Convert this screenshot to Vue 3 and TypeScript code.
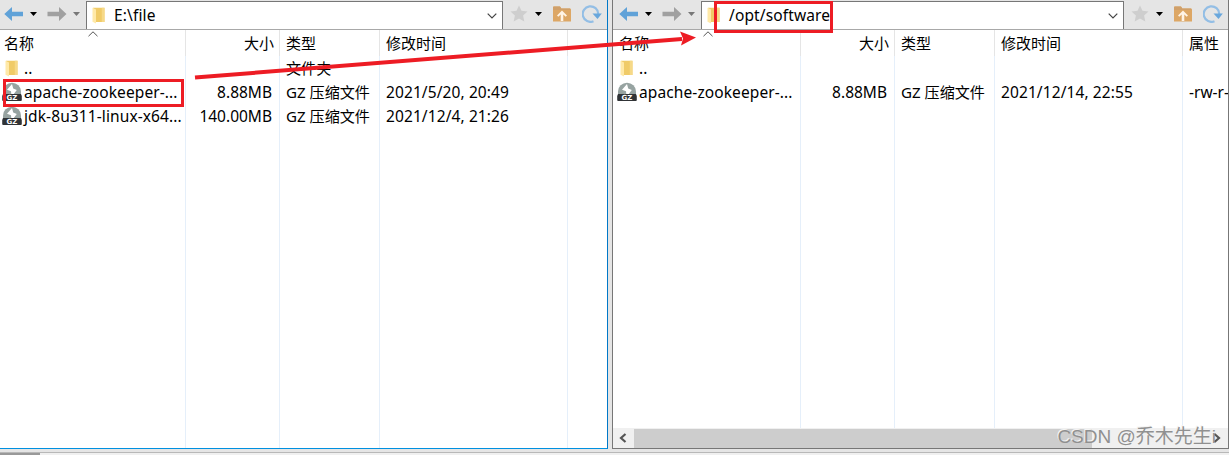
<script setup lang="ts">
interface Column {
  key: string
  title: string
  cells: string[]
}
interface Pane {
  id: string
  path: string
  columns: Column[]
}

const panes: Pane[] = [
  {
    id: 'local',
    path: 'E:\\file',
    columns: [
      { key: 'name', title: '名称', cells: ['..', 'apache-zookeeper-...', 'jdk-8u311-linux-x64...'] },
      { key: 'size', title: '大小', cells: ['', '8.88MB', '140.00MB'] },
      { key: 'type', title: '类型', cells: ['文件夹', 'GZ 压缩文件', 'GZ 压缩文件'] },
      { key: 'time', title: '修改时间', cells: ['', '2021/5/20, 20:49', '2021/12/4, 21:26'] },
    ],
  },
  {
    id: 'remote',
    path: '/opt/software',
    columns: [
      { key: 'name', title: '名称', cells: ['..', 'apache-zookeeper-...'] },
      { key: 'size', title: '大小', cells: ['', '8.88MB'] },
      { key: 'type', title: '类型', cells: ['', 'GZ 压缩文件'] },
      { key: 'time', title: '修改时间', cells: ['', '2021/12/14, 22:55'] },
      { key: 'attr', title: '属性', cells: ['', '-rw-r-'] },
    ],
  },
]
</script>

<template>
  <div class="window">
    <div class="panes">
      <section v-for="pane in panes" :key="pane.id" class="pane" :class="pane.id">
        <div class="toolbar">
          <svg class="arrow back" viewBox="0 0 20 16"><path d="M0.3 8 8 1v4.8h11v4.4H8V15z" /></svg>
          <svg class="caret" viewBox="0 0 8 4"><path d="M0 0h7L3.5 4z" /></svg>
          <svg class="arrow forward" viewBox="0 0 20 16"><path d="M19.5 8 12 1v4.8H0.5v4.4H12V15z" /></svg>
          <svg class="caret dim" viewBox="0 0 8 4"><path d="M0 0h7L3.5 4z" /></svg>
          <div class="address">
            <svg class="folder" viewBox="0 0 14 17">
              <path d="M1 0.800h11.500v14.200H4z" fill="#f0cb68" />
              <path d="M9.800 0.800h2.700v14.200h-2.700z" fill="#f6d988" />
              <path d="M0.500 0.800 4 2.400V16.500L0.500 14.800z" fill="#ffe9a8" />
            </svg>
            <span class="path">{{ pane.path }}</span>
            <svg class="chevron" viewBox="0 0 10 6"><path d="M0.7 0.7 5 5 9.3 0.7" /></svg>
          </div>
          <svg class="star" viewBox="0 0 18 17"><path d="M9 .5l2.500 5.300 6 .7-4.400 4 1.200 6L9 13.600 3.700 16.500l1.200-6L.5 6.500l6-.7z" /></svg>
          <svg class="caret star-caret" viewBox="0 0 8 4"><path d="M0 0h7L3.500 4z" /></svg>
          <svg class="up" viewBox="0 0 18 16">
            <path d="M0 1Q0 .5 1 .5h6l1.300 2H17q1 0 1 1V15.500H0z" fill="#dda765" />
            <path d="M0 1Q0 .5 1 .5h6l1.300 2H17v1.500H0z" fill="#d0a06a" />
            <path d="M9 4.500l5 5-1.300 1.300-2.400-2.300v6.500H7.700V8.500l-2.400 2.300L4 9.500z" fill="#fff4e6" />
          </svg>
          <svg class="refresh" viewBox="0 0 20 18">
            <path d="M11.500 16.300A7.800 7.800 0 1 1 16.300 9" fill="none" stroke="#93bee5" stroke-width="2.200" />
            <path d="M10.500 8.500h9.300l-4.300 5.500z" fill="#69a7dc" />
          </svg>
        </div>
        <div class="listing">
          <div v-for="col in pane.columns" :key="col.key" class="column" :class="col.key">
            <div class="head">
              <span>{{ col.title }}</span>
              <svg v-if="col.key === 'name'" class="sort" viewBox="0 0 10 6"><path d="M0.500 5.200 5 0.800 9.500 5.200" /></svg>
            </div>
            <div class="cells">
              <div v-for="(cell, i) in col.cells" :key="i" class="cell">
                <template v-if="col.key === 'name'">
                  <svg v-if="i === 0" class="folder row-folder" viewBox="0 0 14 17">
                    <path d="M1 0.800h11.500v14.200H4z" fill="#f0cb68" />
                    <path d="M9.800 0.800h2.700v14.200h-2.700z" fill="#f6d988" />
                    <path d="M0.500 0.800 4 2.400V16.500L0.500 14.800z" fill="#ffe9a8" />
                  </svg>
                  <svg v-else class="archive" viewBox="0 0 20 20">
                    <path d="M1 13V9.500a9 8.800 0 0 1 18 0V13z" fill="#97a3a1" />
                    <path d="M10 2 5 7.700l4 1.500.3 3 1.700.8 3.800-5-3.600-1.500z" fill="#fff" />
                    <path d="M1 12h18l.8 2v4q0 1-1 1H1.200q-1 0-1-1v-4z" fill="#303336" />
                    <text x="10" y="18" text-anchor="middle">GZ</text>
                  </svg>
                </template>
                <span>{{ cell }}</span>
              </div>
            </div>
          </div>
        </div>
        <div v-if="pane.id === 'remote'" class="scrollbar">
          <svg viewBox="0 0 8 10"><path d="M6.500 1 2 5l4.500 4" /></svg>
          <div class="thumb"></div>
          <svg class="right" viewBox="0 0 8 10"><path d="M1.500 1 6 5 1.500 9" /></svg>
        </div>
      </section>
    </div>
    <div class="status"><div class="progress"></div></div>
    <svg class="marks" viewBox="0 0 1229 455">
      <rect x="4.500" y="80.500" width="178" height="25" />
      <rect x="715.500" y="2.500" width="116" height="29" />
      <path d="M195 77.500 682 39" stroke-width="4" />
      <path class="tip" d="M696 37.500 680 31.500 683 38.500 681 45.500z" />
    </svg>
    <div class="watermark">CSDN @乔木先生i</div>
  </div>
</template>

<style>
body { overflow: hidden; }
</style>

<style scoped>
.window {
  position: relative;
  width: 1229px;
  height: 455px;
  overflow: hidden;
  box-sizing: border-box;
  display: flex;
  flex-direction: column;
  background: #e5e5e5;
  color: #000;
  font: 15px/24px "Noto Sans", "Noto Sans CJK SC", sans-serif;
  white-space: nowrap;
}
svg { display: block; flex: none; }
.panes { display: flex; gap: 4px; height: 449px; }
.pane {
  box-sizing: border-box;
  display: flex;
  flex-direction: column;
  background: #fff;
  overflow: hidden;
}
.local { width: 608px; border-right: 1px solid #0078c8; border-bottom: 1px solid #0090e0; }
.remote { width: 617px; border: solid #777; border-width: 0 1px 1px; }
.toolbar {
  box-sizing: border-box;
  height: 30px;
  flex: none;
  display: flex;
  align-items: center;
  background: #e5e5e5;
  border-bottom: 1px solid #a8a8a8;
  padding-left: 4px;
}
.remote .toolbar { padding-left: 6px; }
.arrow { width: 20px; height: 16px; margin-top: -2px; }
.back { fill: #60a2d8; }
.forward { fill: #a0a0a0; margin-left: 9px; }
.caret { width: 8px; height: 4px; margin-left: 6px; margin-top: -1px; fill: #000; }
.dim { fill: #777; }
.address {
  box-sizing: border-box;
  width: 417px;
  height: 28px;
  margin: 1px 0 0 5px;
  padding-left: 5px;
  display: flex;
  align-items: center;
  background: #fff;
  border: 1px solid #777;
  border-bottom: 0;
}
.remote .address { width: 423px; }
.folder { width: 14px; height: 17px; }
.path { flex: 1; margin-left: 8px; margin-top: -2px; font-size: 15.5px; letter-spacing: 0.13px; }
.chevron { width: 10px; height: 6px; margin-right: 5px; fill: none; stroke: #444; stroke-width: 1.2; }
.star { width: 18px; height: 17px; margin-left: 7px; margin-top: -2px; fill: #cecece; }
.star-caret { margin-left: 7px; }
.up { width: 18px; height: 16px; margin-left: 10px; margin-top: -1px; }
.refresh { width: 20px; height: 18px; margin-left: 11px; margin-top: -1px; }
.listing { flex: 1; display: flex; overflow: hidden; }
.column { box-sizing: border-box; flex: none; display: flex; flex-direction: column; }
.name { width: 186px; }
.remote .name { width: 188px; }
.size { width: 94px; text-align: right; }
.type { width: 100px; }
.time { width: 188px; }
.attr { width: 60px; }
.head { height: 26px; line-height: 27px; padding: 0 6px; border-right: 1px solid #e5e5e5; position: relative; }
.name .head { padding-left: 4px; }
.remote .name .head { padding-left: 6px; }
.size .head { padding-right: 5px; }
.sort { position: absolute; left: 88px; top: 1px; width: 10px; height: 6px; fill: none; stroke: #555; }
.remote .sort { left: 90px; }
.cells { flex: 1; border-right: 1px solid #e5effa; }
.cell { height: 24px; padding: 0 7px 0 6px; display: flex; align-items: center; }
.name .cell, .size .cell, .time .cell, .attr .cell { font-size: 15.5px; }
.name .cell, .time .cell { letter-spacing: 0.1px; }
.type .cell { font-size: 15.1px; }
.size .cell { justify-content: flex-end; }
.name .cell { padding: 0 0 0 2px; }
.remote .name .cell { padding-left: 4px; }
.row-folder { margin: 0 5px 0 3px; }
.archive { width: 20px; height: 20px; margin-right: 2px; }
.archive text { font: bold 7px "DejaVu Sans", sans-serif; letter-spacing: 0; fill: #fff; }
.scrollbar { height: 20px; flex: none; display: flex; align-items: center; background: #f0f0f0; }
.scrollbar svg { width: 8px; height: 10px; margin: 0 7px 0 6px; fill: none; stroke: #555; stroke-width: 2.2; }
.scrollbar .right { margin: 0 7px 0 auto; }
.thumb { width: 458px; height: 19px; background: #cdcdcd; }
.status { box-sizing: border-box; margin-top: 3px; height: 3px; border-top: 1px solid #b8b8b8; background: #f0f0f0; }
.progress { width: 40px; height: 2px; background: #999; }
.marks { position: absolute; left: 0; top: 0; width: 1229px; height: 455px; fill: none; stroke: #ed1c24; stroke-width: 3; }
.marks .tip { fill: #ed1c24; stroke: none; }
.watermark {
  position: absolute;
  right: 13px;
  top: 425px;
  font: 19px/24px "Liberation Sans", "Noto Sans CJK SC", sans-serif;
  color: #909090;
  text-shadow: -1px -1px 0 #f4f4f4;
}
</style>
